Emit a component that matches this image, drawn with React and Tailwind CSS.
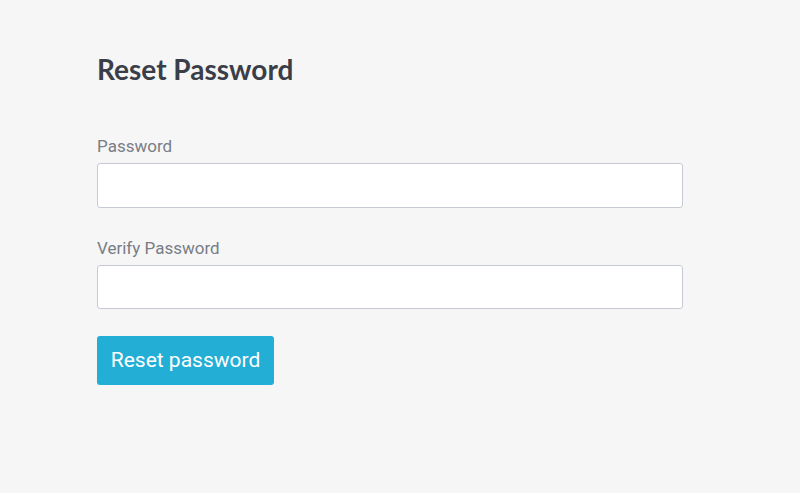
export default function App() {
  return (
    <div className="min-h-[493px] w-[800px] bg-[#f6f6f6] pl-[97px] pt-[50px]" style={{ fontFamily: 'Roboto, sans-serif' }}>
      <h1 className="text-[28px] leading-[38px] font-bold text-[#3a3e48]" style={{ fontFamily: 'Lato, sans-serif' }}>
        Reset Password
      </h1>

      <form className="mt-[46px] w-[586px]" onSubmit={e => e.preventDefault()}>
        <label className="block text-[17px] leading-[25px] text-[#787d86]">Password</label>
        <input type="password" className="mt-[4px] block h-[45px] w-full rounded-[3px] border-[1.5px] border-[#c6cbd3] bg-white" />

        <label className="mt-[28px] block text-[17px] leading-[25px] text-[#787d86]">Verify Password</label>
        <input type="password" className="mt-[4px] block h-[44px] w-full rounded-[3px] border-[1.5px] border-[#c6cbd3] bg-white" />

        <button type="submit" className="mt-[27px] h-[49px] w-[177px] rounded-[3px] bg-[#23aed6] text-[21px] text-white">
          Reset password
        </button>
      </form>
    </div>
  );
}
